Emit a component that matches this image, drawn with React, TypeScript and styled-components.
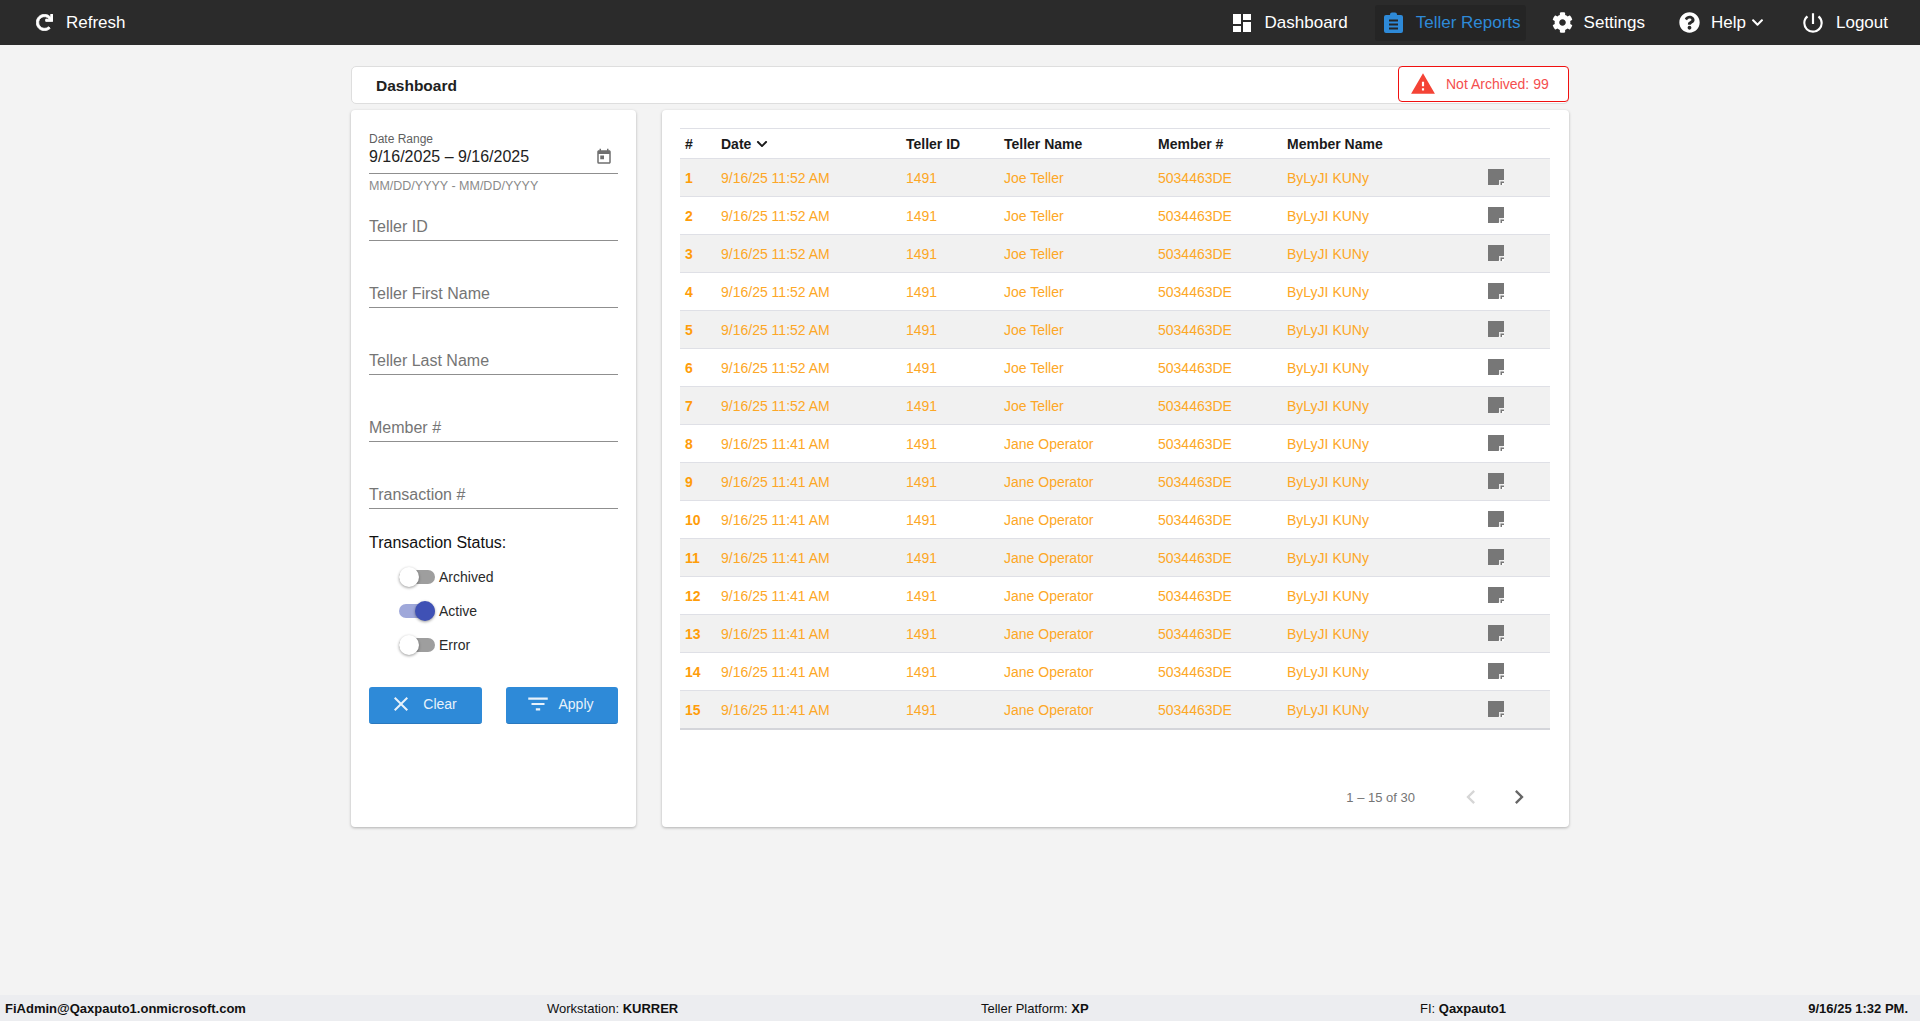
import React, { FC } from "react";
import styled, { createGlobalStyle } from "styled-components";
import { FaRedo, FaCog, FaQuestionCircle, FaChevronDown } from "react-icons/fa";
import {
  MdDashboard,
  MdPowerSettingsNew,
  MdWarning,
  MdToday,
  MdClose,
  MdFilterList,
  MdChevronLeft,
  MdChevronRight,
} from "react-icons/md";

const GlobalStyle = createGlobalStyle`
  html, body { margin: 0; padding: 0; height: 100%; }
  body { font-family: "Liberation Sans", Arial, sans-serif; background: #f3f3f3; }
  * { box-sizing: border-box; }
`;

const Page = styled.div`
  height: 100vh;
  display: flex;
  flex-direction: column;
`;

const TopBar = styled.header`
  height: 45px;
  background: #2b2b2b;
  color: #fff;
  display: flex;
  align-items: center;
  justify-content: space-between;
  padding: 0 26px 0 30px;
`;

const NavGroup = styled.nav`
  display: flex;
  align-items: center;
`;

const NavItem = styled.a<{ $active?: boolean; $gap?: number; $iconGap?: number }>`
  display: flex;
  align-items: center;
  height: 36px;
  padding: 0 ${(p) => (p.$active ? "5px 0 9px" : "6px")};
  margin-left: ${(p) => p.$gap ?? 0}px;
  gap: ${(p) => p.$iconGap ?? 11}px;
  font-size: 17px;
  border-radius: 3px;
  color: ${(p) => (p.$active ? "#2e8ad8" : "#fff")};
  background: ${(p) => (p.$active ? "#252525" : "transparent")};
  svg { flex: none; }
`;

const RefreshIcon = styled(FaRedo)`
  stroke: #fff;
  stroke-width: 24px;
`;

const HelpArrow = styled(FaChevronDown)`
  margin-left: -6px;
`;

const Main = styled.main`
  flex: 1;
  width: 1218px;
  margin: 0 auto 0 351px;
  padding-top: 21px;
`;

const TitleBar = styled.div`
  height: 38px;
  background: #fff;
  border: 1px solid #dedede;
  border-radius: 5px;
  display: flex;
  align-items: center;
  justify-content: space-between;
  padding-left: 24px;
`;

const Title = styled.h1`
  margin: 0;
  font-size: 15.5px;
  font-weight: 700;
  color: #212121;
  padding-top: 1px;
`;

const Alert = styled.div`
  width: 171px;
  height: 36px;
  margin: -2px -1px 0 0;
  border: 1px solid #f01010;
  border-radius: 4px;
  background: #fff;
  color: #f44e4e;
  font-size: 14px;
  display: flex;
  align-items: center;
  gap: 10px;
  padding-left: 11px;
  svg { color: #f44336; }
`;

const Columns = styled.div`
  display: grid;
  grid-template-columns: 285px 907px;
  gap: 26px;
  margin-top: 6px;
`;

const Card = styled.section`
  height: 717px;
  background: #fff;
  border-radius: 4px;
  box-shadow: 0 1px 3px rgba(0, 0, 0, 0.28);
`;

const FilterCard = styled(Card)`
  padding: 22px 18px 0 18px;
`;

const DateLabel = styled.div`
  font-size: 12px;
  line-height: 14px;
  color: #5f5f5f;
`;

const DateValue = styled.div`
  display: flex;
  align-items: center;
  justify-content: space-between;
  height: 22px;
  padding: 0 5px 1px 0;
  font-size: 16px;
  color: #222;
  svg { color: #6f6f6f; }
`;

const DateRule = styled.div`
  height: 1px;
  margin-top: 5px;
  background: #8f8f8f;
`;

const Hint = styled.div`
  margin-top: 5px;
  font-size: 12.5px;
  line-height: 14px;
  color: #8a8a8a;
`;

const Field = styled.div`
  height: 67px;
  display: flex;
  align-items: flex-end;
  padding-bottom: 3px;
  font-size: 16px;
  line-height: 20px;
  color: #757575;
  border-bottom: 1px solid #8f8f8f;
`;

const FirstField = styled(Field)`
  height: 48px;
`;

const StatusTitle = styled.div`
  margin-top: 24px;
  font-size: 16px;
  line-height: 20px;
  color: #111;
`;

const ToggleList = styled.div`
  display: flex;
  flex-direction: column;
  gap: 14px;
  margin-top: 14px;
  padding-left: 30px;
`;

const ToggleRow = styled.label`
  display: flex;
  align-items: center;
  height: 20px;
  font-size: 14px;
  color: #2a2a2a;
  gap: 4px;
`;

const Toggle = styled.span<{ $on?: boolean }>`
  position: relative;
  width: 36px;
  height: 14px;
  border-radius: 7px;
  background: ${(p) => (p.$on ? "#9fa8da" : "#9e9e9e")};
  &::after {
    content: "";
    position: absolute;
    top: -3px;
    left: ${(p) => (p.$on ? "16px" : "0")};
    width: 20px;
    height: 20px;
    border-radius: 50%;
    background: ${(p) => (p.$on ? "#3f51b5" : "#fff")};
    box-shadow: 0 1px 3px rgba(0, 0, 0, 0.4);
  }
`;

const ButtonRow = styled.div`
  display: grid;
  grid-template-columns: 113px 112px;
  justify-content: space-between;
  margin-top: 32px;
`;

const ActionButton = styled.button<{ $gap: number }>`
  height: 37px;
  display: flex;
  align-items: center;
  justify-content: center;
  gap: ${(p) => p.$gap}px;
  padding: 0 5px 2px 0;
  border: 0;
  border-bottom: 1px solid #2a78be;
  border-radius: 3px;
  background: #2e8ad8;
  color: #e8f2fb;
  font-family: inherit;
  font-size: 14px;
`;

const TableCard = styled(Card)`
  padding: 18px 19px 0 18px;
  display: flex;
  flex-direction: column;
`;

const Row = styled.div<{ $shade?: boolean; $head?: boolean }>`
  display: grid;
  grid-template-columns: 36px 185px 98px 154px 129px 201px 1fr;
  align-items: center;
  height: ${(p) => (p.$head ? "31px" : "38px")};
  padding-left: 5px;
  border-bottom: 1px solid #dfe0e6;
  border-top: ${(p) => (p.$head ? "1px solid #dfe0e6" : "0")};
  background: ${(p) => (p.$shade ? "#f1f1f1" : "#fff")};
  font-size: 14px;
  color: #fda726;
`;

const LastRow = styled(Row)`
  height: 39px;
  border-bottom: 2px solid #d4d5da;
`;

const HeadCell = styled.div`
  display: flex;
  align-items: center;
  gap: 5px;
  font-size: 14px;
  font-weight: 700;
  color: #1a1a1a;
`;

const IndexCell = styled.div`
  font-weight: 700;
  color: #ff9d0a;
`;

const Cell = styled.div`
  white-space: nowrap;
`;

const NoteCell = styled.div`
  display: flex;
  align-items: center;
  margin-top: -2px;
`;

const Pager = styled.div`
  display: flex;
  align-items: center;
  justify-content: flex-end;
  margin-top: 53px;
  padding-right: 17px;
  font-size: 13px;
  color: #757575;
`;

const PagerLabel = styled.span`
  margin-right: 42px;
`;

const PagerButton = styled.span<{ $off?: boolean }>`
  display: flex;
  width: 28px;
  justify-content: center;
  color: ${(p) => (p.$off ? "#d6d6d6" : "#666")};
  & + & { margin-left: 20px; }
`;

const Footer = styled.footer`
  height: 26px;
  background: #ecedf0;
  display: grid;
  grid-template-columns: 542px 434px 439px 1fr auto;
  align-items: center;
  padding: 0 12px 0 5px;
  font-size: 13px;
  font-weight: 700;
  color: #111;
`;

const FooterLabel = styled.span`
  font-weight: 400;
`;

const NoteIcon: FC = () => (
  <svg width="16" height="16" viewBox="0 0 16 16" aria-hidden="true">
    <path d="M0 0H16V10.5L10.5 16H0Z" fill="#777" />
    <path d="M11 16V11H16V16Z" fill="#fff" opacity="0.85" />
    <path d="M12.5 16V12.5H16V14H14V16Z" fill="#777" />
  </svg>
);

const ReportIcon: FC = () => (
  <svg width="19" height="21" viewBox="0 0 19 21" aria-hidden="true">
    <path
      fillRule="evenodd"
      fill="currentColor"
      d="M2 3H6V2.5A2 2 0 0 1 8 .5H11A2 2 0 0 1 13 2.5V3H17A2 2 0 0 1 19 5V19A2 2 0 0 1 17 21H2A2 2 0 0 1 0 19V5A2 2 0 0 1 2 3ZM5 7.5V9.5H14V7.5ZM5 11.5V13.5H14V11.5ZM5 15.5V17.5H14V15.5Z"
    />
  </svg>
);

const rows = Array.from({ length: 15 }, (_, i) => ({
  id: i + 1,
  date: i < 7 ? "9/16/25 11:52 AM" : "9/16/25 11:41 AM",
  tellerName: i < 7 ? "Joe Teller" : "Jane Operator",
}));

const App: FC = () => {
  return (
    <Page>
      <GlobalStyle />
      <TopBar>
        <NavGroup>
          <NavItem $iconGap={13}>
            <RefreshIcon size={17} />
            Refresh
          </NavItem>
        </NavGroup>
        <NavGroup>
          <NavItem>
            <MdDashboard size={24} />
            Dashboard
          </NavItem>
          <NavItem $active $gap={21} $iconGap={13}>
            <ReportIcon />
            Teller Reports
          </NavItem>
          <NavItem $gap={20}>
            <FaCog size={21} />
            Settings
          </NavItem>
          <NavItem $gap={22}>
            <FaQuestionCircle size={21} />
            <span>Help</span>
            <HelpArrow size={13} />
          </NavItem>
          <NavItem $gap={24} $iconGap={10}>
            <MdPowerSettingsNew size={26} />
            Logout
          </NavItem>
        </NavGroup>
      </TopBar>

      <Main>
        <TitleBar>
          <Title>Dashboard</Title>
          <Alert>
            <MdWarning size={26} />
            Not Archived: 99
          </Alert>
        </TitleBar>

        <Columns>
          <FilterCard>
            <DateLabel>Date Range</DateLabel>
            <DateValue>
              9/16/2025 – 9/16/2025
              <MdToday size={18} />
            </DateValue>
            <DateRule />
            <Hint>MM/DD/YYYY - MM/DD/YYYY</Hint>
            <FirstField>Teller ID</FirstField>
            <Field>Teller First Name</Field>
            <Field>Teller Last Name</Field>
            <Field>Member #</Field>
            <Field>Transaction #</Field>

            <StatusTitle>Transaction Status:</StatusTitle>
            <ToggleList>
              <ToggleRow><Toggle />Archived</ToggleRow>
              <ToggleRow><Toggle $on />Active</ToggleRow>
              <ToggleRow><Toggle />Error</ToggleRow>
            </ToggleList>

            <ButtonRow>
              <ActionButton $gap={10}>
                <MdClose size={24} />
                Clear
              </ActionButton>
              <ActionButton $gap={7}>
                <MdFilterList size={26} />
                Apply
              </ActionButton>
            </ButtonRow>
          </FilterCard>

          <TableCard>
            <Row $head>
              <HeadCell>#</HeadCell>
              <HeadCell>
                Date
                <FaChevronDown size={12} />
              </HeadCell>
              <HeadCell>Teller ID</HeadCell>
              <HeadCell>Teller Name</HeadCell>
              <HeadCell>Member #</HeadCell>
              <HeadCell>Member Name</HeadCell>
              <HeadCell />
            </Row>
            {rows.map((r, i) => {
              const RowKind = i === rows.length - 1 ? LastRow : Row;
              return (
                <RowKind key={r.id} $shade={i % 2 === 0}>
                  <IndexCell>{r.id}</IndexCell>
                  <Cell>{r.date}</Cell>
                  <Cell>1491</Cell>
                  <Cell>{r.tellerName}</Cell>
                  <Cell>5034463DE</Cell>
                  <Cell>ByLyJI KUNy</Cell>
                  <NoteCell><NoteIcon /></NoteCell>
                </RowKind>
              );
            })}
            <Pager>
              <PagerLabel>1 – 15 of 30</PagerLabel>
              <PagerButton $off><MdChevronLeft size={28} /></PagerButton>
              <PagerButton><MdChevronRight size={28} /></PagerButton>
            </Pager>
          </TableCard>
        </Columns>
      </Main>

      <Footer>
        <span>FiAdmin@Qaxpauto1.onmicrosoft.com</span>
        <span><FooterLabel>Workstation: </FooterLabel>KURRER</span>
        <span><FooterLabel>Teller Platform: </FooterLabel>XP</span>
        <span><FooterLabel>FI: </FooterLabel>Qaxpauto1</span>
        <span>9/16/25 1:32 PM.</span>
      </Footer>
    </Page>
  );
};

export default App;
